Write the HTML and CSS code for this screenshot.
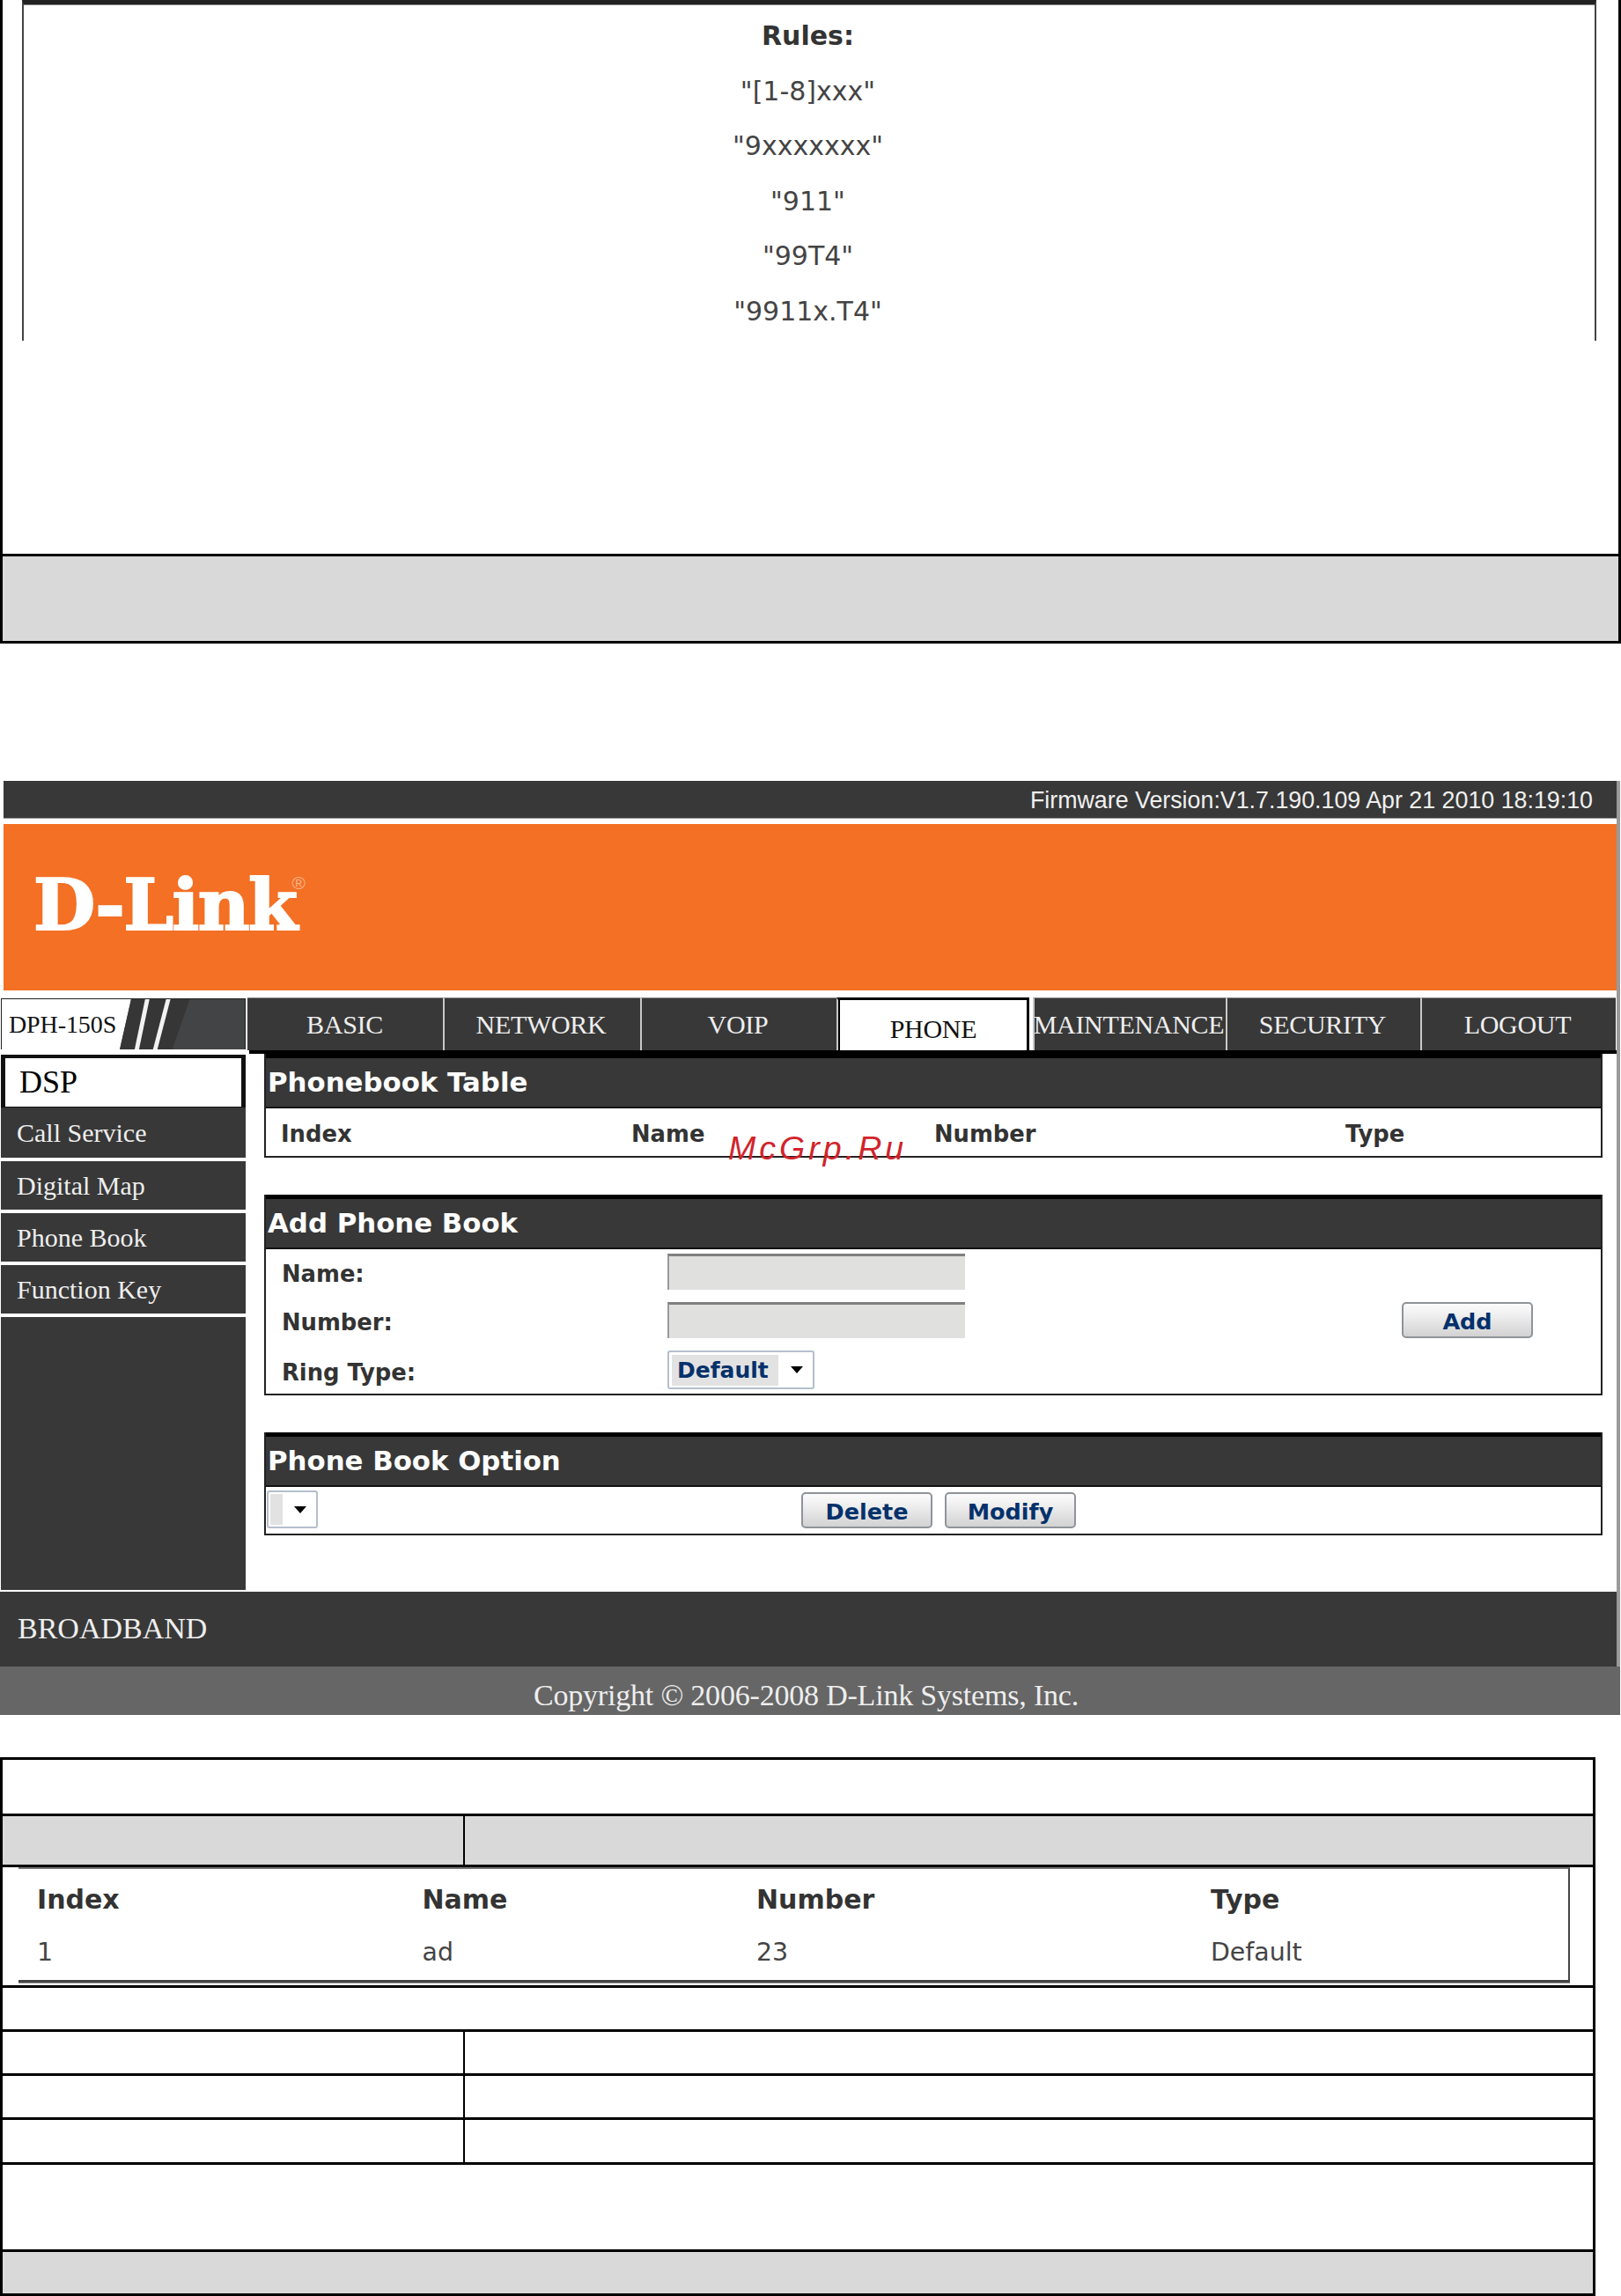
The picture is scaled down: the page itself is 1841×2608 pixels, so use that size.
FILE: index.html
```html
<!DOCTYPE html>
<html lang="en">
<head>
<meta charset="utf-8">
<title>D-Link DPH-150S Phone Book</title>
<link rel="stylesheet" href="styles.css">
</head>
<body>
<section class="rules-card">
  <div class="rules-area">
    <div class="rules-inner">
      <p class="rule rule-title">Rules:</p>
      <p class="rule">"[1-8]xxx"</p>
      <p class="rule">"9xxxxxxx"</p>
      <p class="rule">"911"</p>
      <p class="rule">"99T4"</p>
      <p class="rule">"9911x.T4"</p>
    </div>
  </div>
  <div class="gray-row rules-foot"></div>
</section>

<section class="router">
  <div class="fwbar">Firmware Version:V1.7.190.109 Apr 21 2010 18:19:10</div>
  <div class="banner"><span class="logo">D-Link<span class="reg">®</span></span></div>
  <nav class="navrow">
    <div class="model">
      <svg class="model-art" viewBox="0 0 278 58" preserveAspectRatio="none" aria-hidden="true">
        <polygon points="0,0 148,0 135,58 0,58" fill="#fff"/>
        <polygon points="148,0 215,0 195,58 135,58" fill="#363636"/>
        <polygon points="164,0 169,0 157,58 152,58" fill="#f2f2f2"/>
        <polygon points="188,0 193,0 178,58 173,58" fill="#f2f2f2"/>
      </svg>
      <span class="model-name">DPH-150S</span>
    </div>
    <a class="tab">BASIC</a>
    <a class="tab">NETWORK</a>
    <a class="tab">VOIP</a>
    <a class="tab tab-active">PHONE</a>
    <a class="tab">MAINTENANCE</a>
    <a class="tab">SECURITY</a>
    <a class="tab">LOGOUT</a>
  </nav>
  <div class="main">
    <aside class="sidebar">
      <div class="side-active">DSP</div>
      <div class="side-item side-first">Call Service</div>
      <div class="side-item">Digital Map</div>
      <div class="side-item">Phone Book</div>
      <div class="side-item">Function Key</div>
      <div class="side-fill"></div>
    </aside>
    <div class="content">
      <div class="panel">
        <h2 class="panel-head">Phonebook Table</h2>
        <div class="pb-cols">
          <span>Index</span><span>Name</span><span>Number</span><span>Type</span>
        </div>
      </div>
      <div class="panel">
        <h2 class="panel-head">Add Phone Book</h2>
        <div class="add-form">
          <label class="f-label">Name:</label>
          <input class="f-input" type="text">
          <span></span>
          <label class="f-label">Number:</label>
          <input class="f-input" type="text">
          <button class="btn btn-add">Add</button>
          <label class="f-label">Ring Type:</label>
          <div class="select select-ring">
            <span class="select-val">Default</span>
            <svg class="arrow" viewBox="0 0 14 8" aria-hidden="true"><path d="M0 0H14L7 8Z"/></svg>
          </div>
          <span></span>
        </div>
      </div>
      <div class="panel">
        <h2 class="panel-head">Phone Book Option</h2>
        <div class="opt-row">
          <div class="select select-small">
            <span class="select-val"></span>
            <svg class="arrow" viewBox="0 0 14 8" aria-hidden="true"><path d="M0 0H14L7 8Z"/></svg>
          </div>
          <button class="btn">Delete</button>
          <button class="btn">Modify</button>
        </div>
      </div>
    </div>
  </div>
  <div class="broadband">BROADBAND</div>
  <div class="copyright">Copyright © 2006-2008 D-Link Systems, Inc.</div>
  <div class="edge-line"></div>
  <div class="watermark">McGrp.Ru</div>
</section>

<section class="sheet">
  <div class="s-row s-h1"></div>
  <div class="s-row s-h2 s-split gray-row"><i></i><i></i></div>
  <div class="s-row s-h3">
    <div class="entries">
      <b>Index</b><b>Name</b><b>Number</b><b>Type</b>
      <span>1</span><span>ad</span><span>23</span><span>Default</span>
    </div>
  </div>
  <div class="s-row s-h4"></div>
  <div class="s-row s-h4 s-split"><i></i><i></i></div>
  <div class="s-row s-h4 s-split"><i></i><i></i></div>
  <div class="s-row s-h5 s-split"><i></i><i></i></div>
  <div class="s-row s-h6"></div>
  <div class="s-row s-h7 gray-row"></div>
</section>
</body>
</html>
```

FILE: styles.css
```css
* { box-sizing: border-box; }
html, body { margin: 0; padding: 0; background: #fff; }
body { width: 1841px; height: 2608px; overflow: hidden; font-family: "DejaVu Sans", sans-serif; color: #333; }
.gray-row { background: #d9d9d9; }

/* first block */
.rules-card { height: 731px; border: 3px solid #000; border-top: 0; display: flex; flex-direction: column; }
.rules-area { height: 632px; border-bottom: 3px solid #000; }
.rules-inner { margin: 0 25px 0 22px; height: 387px; border: 2px solid #444; border-bottom: 0; border-top: 5px solid #222; padding: 5px 3px 0 0; box-shadow: inset 0 1px 0 #888; }
.rule { margin: 0; height: 62.6px; line-height: 62.6px; text-align: center; font-size: 30px; color: #444; }
.rule-title { font-weight: 700; color: #333; }
.rules-foot { flex: 1; }

/* router UI */
.router { position: relative; margin-top: 156px; height: 1061px; font-family: "Liberation Serif", serif; color: #eee; }
.fwbar { margin: 0 5px 6px 4px; height: 43px; background: #383838; border-bottom: 1px solid #999; display: flex; align-items: center; justify-content: flex-end; padding: 3px 27px 0 0; font: 26.8px "Liberation Sans", sans-serif; color: #f0f0f0; }
.banner { margin: 0 5px 8px 4px; height: 189px; background: #f37024; padding: 55px 0 0 34px; }
.logo { display: inline-flex; align-items: flex-start; font: 700 81px/74px "DejaVu Serif", serif; letter-spacing: -1.6px; color: #fff; -webkit-text-stroke: 2px #fff; }
.reg { font: 400 21px/24px "Liberation Sans", sans-serif; letter-spacing: 0; color: #f9b48c; -webkit-text-stroke: 0; margin-left: -5px; }
.navrow { width: 1835px; height: 60px; display: grid; grid-template-columns: 281px 222px 224px 223px 223px 219px 221px 222px; }
.model { position: relative; margin: 1px 2px 1px 1px; border: 1px solid #222; border-bottom: 0; background: #424446; color: #111; display: flex; align-items: center; padding-left: 8px; overflow: hidden; }
.model-art { position: absolute; inset: 0; width: 100%; height: 100%; }
.model-name { position: relative; font-size: 28px; letter-spacing: -.1px; }
.tab { display: flex; align-items: center; justify-content: center; background: #383838; border-left: 2px solid #c8c8c8; border-top: 1px solid #888; padding-right: 3px; font-size: 30px; letter-spacing: -.3px; white-space: nowrap; color: #eee; }
.tab:first-of-type { border-left: 0; padding-right: 1px; }
.tab-active { background: #fff; color: #111; border-top: 3px solid #000; border-right: 3px solid #000; padding: 8px 0 0 2px; margin-right: 4px; box-shadow: inset 2px 0 0 #000; }
.main { display: grid; grid-template-columns: 279px 1557px; width: 1836px; height: 613px; }
.sidebar { margin: 5px 0 0 1px; display: flex; flex-direction: column; }
.side-active { height: 60px; background: #fff; border: 4px solid #111; border-width: 4px 5px 1px; color: #000; font-size: 36px; line-height: 55px; padding-left: 16px; }
.side-item { height: 55px; background: #383838; margin-bottom: 4px; font-size: 30px; line-height: 55px; padding-left: 18px; color: #eee; }
.side-first { height: 57px; line-height: 57px; }
.side-fill { flex: 1; background: #383838; }
.content { margin-left: 4px; border-top: 4px solid #000; padding: 0 16px 0 17px; display: flex; flex-direction: column; gap: 42px; }
.panel { border: 2px solid #222; border-top: 0; }
.panel-head { margin: 0; height: 62px; border-top: 5px solid #000; border-bottom: 2px solid #111; background: #383838; font: 700 30.8px/55px "DejaVu Sans", sans-serif; color: #fff; padding-left: 2px; }
.pb-cols { height: 54px; display: grid; grid-template-columns: 398px 344px 467px 1fr; align-items: center; padding: 3px 0 0 17px; font: 700 25.8px "DejaVu Sans", sans-serif; color: #333; }
.add-form { height: 164px; display: grid; grid-template-columns: 438px 337px 1fr; grid-template-rows: 41px 41px 44px; row-gap: 14px; align-items: center; padding: 5px 0 0 18px; font: 700 25.8px "DejaVu Sans", sans-serif; color: #333; }
.f-label { padding-top: 5px; }
.f-input { width: 338px; height: 41px; padding: 0; background: #e0e0de; border: 0; border-top: 3px solid #7f7f7f; border-left: 2px solid #9a9a9a; outline: 0; }
.btn { display: block; width: 149px; height: 41px; padding: 3px 0 0; border: 2px solid #8f9499; border-radius: 5px; background: linear-gradient(#fbfbfb, #f1f1f1 30%, #d2d2d2); font: 700 25.5px "DejaVu Sans", sans-serif; color: #04316b; }
.btn-add { margin-left: 497px; }
.select { display: flex; align-items: center; background: #fff; border: 2px solid #b4bfcc; border-radius: 3px; height: 44px; }
.select-val { display: block; background: #e2e2e2; font: 700 25px/35px "DejaVu Sans", sans-serif; color: #04316b; }
.select-ring { width: 167px; padding: 0 0 0 3px; }
.select-ring .select-val { width: 121px; height: 35px; padding-left: 6px; }
.arrow { display: block; width: 14px; height: 8px; fill: #000; }
.select-ring .arrow { margin-left: 14px; }
.opt-row { height: 53px; display: grid; grid-template-columns: 608px 149px 149px; align-items: start; padding-top: 5px; }
.opt-row .btn + .btn { margin-left: 14px; }
.opt-row .btn { margin-top: 1px; }
.select-small { width: 58px; height: 43px; margin-left: 1px; margin-top: -1px; padding-left: 2px; }
.select-small .select-val { width: 14px; height: 35px; }
.select-small .arrow { margin-left: 13px; }
.broadband { margin-top: 2px; width: 1836px; height: 85px; background: #383838; font-size: 34px; line-height: 83px; padding-left: 20px; color: #eee; }
.copyright { width: 1840px; height: 55px; background: #666; padding-right: 9px; text-align: center; font-size: 34px; line-height: 65px; letter-spacing: -.2px; color: #eee; white-space: nowrap; overflow: hidden; }
.edge-line { position: absolute; left: 1836px; top: 0; width: 4px; height: 1006px; background: #9a9a9a; }
.watermark { position: absolute; left: 827px; top: 395px; font: italic 37.6px/44px "Liberation Sans", sans-serif; letter-spacing: 4px; color: #d2232a; }

/* lower sheet */
.sheet { margin-top: 48px; width: 1812px; height: 612px; border: 3px solid #000; border-bottom: 3px solid #000; }
.s-row { border-bottom: 3px solid #000; }
.s-row:last-child { border-bottom: 0; }
.s-h1 { height: 64px; }
.s-h2 { height: 58px; }
.s-h3 { height: 137px; }
.s-h4 { height: 50px; }
.s-h5 { height: 51px; }
.s-h6 { height: 99px; }
.s-h7 { height: 47px; }
.s-split { display: grid; grid-template-columns: 525px 1fr; }
.s-split i:first-child { border-right: 2px solid #000; }
.entries { margin-left: 18px; width: 1762px; height: 131px; border-top: 2px solid #777; border-right: 2px solid #444; border-bottom: 3px solid #444; box-shadow: 0 1px 0 #999; display: grid; grid-template-columns: 437.5px 379.5px 516px 1fr; grid-template-rows: 68px 52px; align-items: center; padding-left: 21px; font-size: 28.4px; color: #444; }
.entries b { font-size: 30px; color: #333; }
```
